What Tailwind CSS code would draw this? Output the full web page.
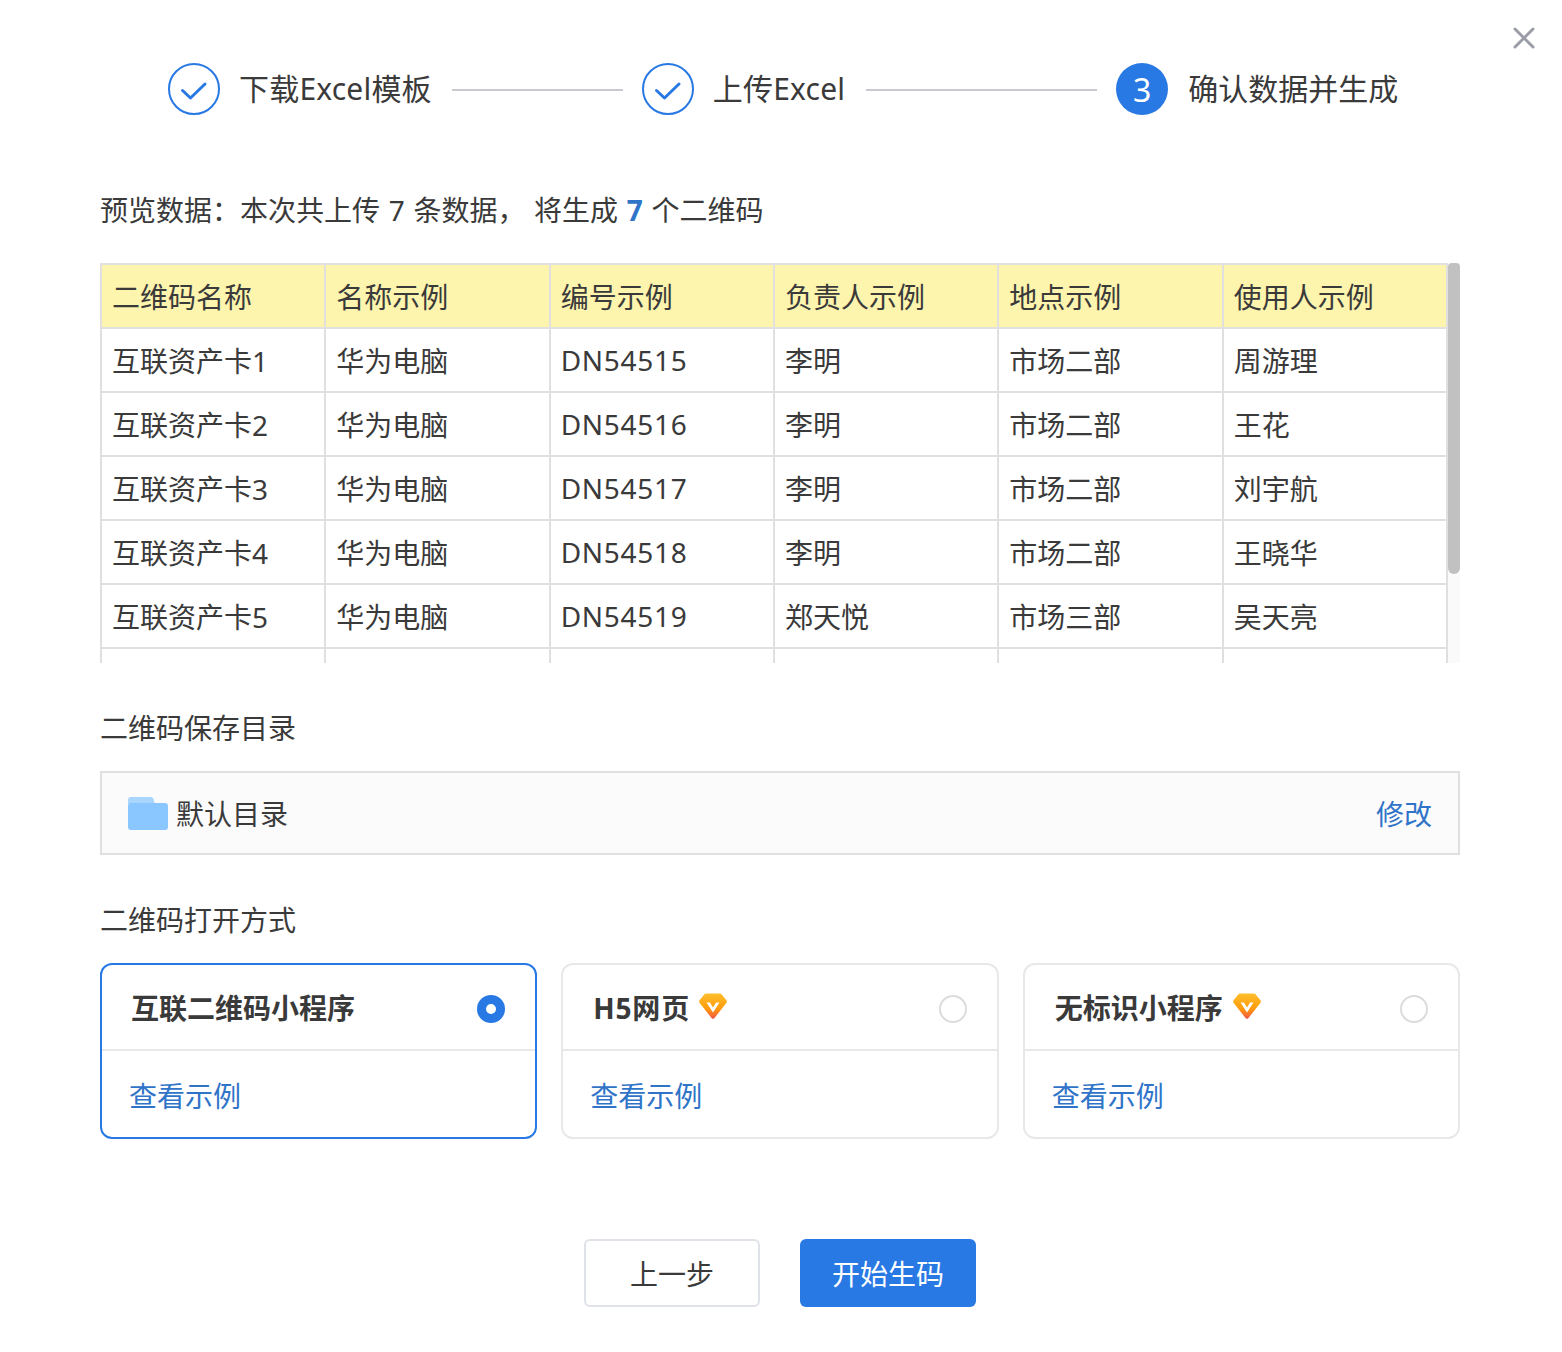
<!DOCTYPE html>
<html lang="zh-CN">
<head>
    <meta charset="UTF-8">
    <title>批量生成二维码</title>
    <script src="https://cdn.jsdelivr.net/npm/@tailwindcss/browser@4"></script>
</head>
<body class="bg-white text-[#3a3a3a] font-['Noto_Sans','Noto_Sans_CJK_SC',sans-serif]">
    <div class="relative w-[1562px] h-[1352px] pl-[100px] pr-[102px] pt-[63px] text-[28px] leading-[40px]">
        <!-- close -->
        <svg class="absolute left-[1512px] top-[26px] w-6 h-6" viewBox="0 0 24 24" fill="none" stroke="#9a9ca6" stroke-width="3" stroke-linecap="round">
            <path d="M3 3l18 18M21 3L3 21"/>
        </svg>

        <!-- steps -->
        <div class="flex items-center h-[52px] pl-[68px] text-[30px]">
            <div class="flex items-center justify-center w-[52px] h-[52px] rounded-full border-2 border-[#2979e4]">
                <svg class="w-7 h-7 mt-px" viewBox="0 0 28 28" fill="none" stroke="#2979e4" stroke-width="3" stroke-linecap="round" stroke-linejoin="round"><path d="M2.500 14.500l8 7.500L25 8"/></svg>
            </div>
            <span class="ml-[19px] tracking-[0.2px]">下载Excel模板</span>
            <div class="ml-[20px] mt-0.5 w-[171px] h-0.5 bg-[#c8cad0]"></div>
            <div class="ml-[19px] flex items-center justify-center w-[52px] h-[52px] rounded-full border-2 border-[#2979e4]">
                <svg class="w-7 h-7 mt-px" viewBox="0 0 28 28" fill="none" stroke="#2979e4" stroke-width="3" stroke-linecap="round" stroke-linejoin="round"><path d="M2.500 14.500l8 7.500L25 8"/></svg>
            </div>
            <span class="ml-[19px] tracking-[0.2px]">上传Excel</span>
            <div class="ml-[21px] mt-0.5 w-[231px] h-0.5 bg-[#c8cad0]"></div>
            <div class="ml-[19px] flex items-center justify-center pt-0.5 w-[52px] h-[52px] rounded-full bg-[#2979e4] text-white text-[32px]">3</div>
            <span class="ml-5">确认数据并生成</span>
        </div>

        <p class="mt-[75px] whitespace-pre [word-spacing:1.4px]">预览数据：本次共上传 7 条数据， 将生成 <b class="text-[#2f74c8]">7</b> 个二维码</p>

        <!-- table -->
        <div class="mt-[33px] h-[400px] flex overflow-hidden">
            <table class="w-[1348px] h-max table-fixed border-collapse">
                <thead>
                    <tr class="h-16 bg-[#fdf4ae] text-left">
                        <th class="font-normal pl-[10px] pt-0.5 border-2 border-[#e0e0e0]">二维码名称</th>
                        <th class="font-normal pl-[10px] pt-0.5 border-2 border-[#e0e0e0]">名称示例</th>
                        <th class="font-normal pl-[10px] pt-0.5 border-2 border-[#e0e0e0]">编号示例</th>
                        <th class="font-normal pl-[10px] pt-0.5 border-2 border-[#e0e0e0]">负责人示例</th>
                        <th class="font-normal pl-[10px] pt-0.5 border-2 border-[#e0e0e0]">地点示例</th>
                        <th class="font-normal pl-[10px] pt-0.5 border-2 border-[#e0e0e0]">使用人示例</th>
                    </tr>
                </thead>
                <tbody>
                    <tr class="h-16">
                        <td class="pl-[10px] pt-0.5 border-2 border-[#e0e0e0]">互联资产卡1</td>
                        <td class="pl-[10px] pt-0.5 border-2 border-[#e0e0e0]">华为电脑</td>
                        <td class="pl-[10px] border-2 border-[#e0e0e0] tracking-[0.7px]">DN54515</td>
                        <td class="pl-[10px] pt-0.5 border-2 border-[#e0e0e0]">李明</td>
                        <td class="pl-[10px] pt-0.5 border-2 border-[#e0e0e0]">市场二部</td>
                        <td class="pl-[10px] pt-0.5 border-2 border-[#e0e0e0]">周游理</td>
                    </tr>
                    <tr class="h-16">
                        <td class="pl-[10px] pt-0.5 border-2 border-[#e0e0e0]">互联资产卡2</td>
                        <td class="pl-[10px] pt-0.5 border-2 border-[#e0e0e0]">华为电脑</td>
                        <td class="pl-[10px] border-2 border-[#e0e0e0] tracking-[0.7px]">DN54516</td>
                        <td class="pl-[10px] pt-0.5 border-2 border-[#e0e0e0]">李明</td>
                        <td class="pl-[10px] pt-0.5 border-2 border-[#e0e0e0]">市场二部</td>
                        <td class="pl-[10px] pt-0.5 border-2 border-[#e0e0e0]">王花</td>
                    </tr>
                    <tr class="h-16">
                        <td class="pl-[10px] pt-0.5 border-2 border-[#e0e0e0]">互联资产卡3</td>
                        <td class="pl-[10px] pt-0.5 border-2 border-[#e0e0e0]">华为电脑</td>
                        <td class="pl-[10px] border-2 border-[#e0e0e0] tracking-[0.7px]">DN54517</td>
                        <td class="pl-[10px] pt-0.5 border-2 border-[#e0e0e0]">李明</td>
                        <td class="pl-[10px] pt-0.5 border-2 border-[#e0e0e0]">市场二部</td>
                        <td class="pl-[10px] pt-0.5 border-2 border-[#e0e0e0]">刘宇航</td>
                    </tr>
                    <tr class="h-16">
                        <td class="pl-[10px] pt-0.5 border-2 border-[#e0e0e0]">互联资产卡4</td>
                        <td class="pl-[10px] pt-0.5 border-2 border-[#e0e0e0]">华为电脑</td>
                        <td class="pl-[10px] border-2 border-[#e0e0e0] tracking-[0.7px]">DN54518</td>
                        <td class="pl-[10px] pt-0.5 border-2 border-[#e0e0e0]">李明</td>
                        <td class="pl-[10px] pt-0.5 border-2 border-[#e0e0e0]">市场二部</td>
                        <td class="pl-[10px] pt-0.5 border-2 border-[#e0e0e0]">王晓华</td>
                    </tr>
                    <tr class="h-16">
                        <td class="pl-[10px] pt-0.5 border-2 border-[#e0e0e0]">互联资产卡5</td>
                        <td class="pl-[10px] pt-0.5 border-2 border-[#e0e0e0]">华为电脑</td>
                        <td class="pl-[10px] border-2 border-[#e0e0e0] tracking-[0.7px]">DN54519</td>
                        <td class="pl-[10px] pt-0.5 border-2 border-[#e0e0e0]">郑天悦</td>
                        <td class="pl-[10px] pt-0.5 border-2 border-[#e0e0e0]">市场三部</td>
                        <td class="pl-[10px] pt-0.5 border-2 border-[#e0e0e0]">吴天亮</td>
                    </tr>
                    <tr class="h-16">
                        <td class="border-2 border-[#e0e0e0]"></td>
                        <td class="border-2 border-[#e0e0e0]"></td>
                        <td class="border-2 border-[#e0e0e0]"></td>
                        <td class="border-2 border-[#e0e0e0]"></td>
                        <td class="border-2 border-[#e0e0e0]"></td>
                        <td class="border-2 border-[#e0e0e0]"></td>
                    </tr>
                </tbody>
            </table>
            <div class="flex-1 bg-[#fafafa]">
                <div class="h-[311px] bg-[#c1c1c1] rounded-b-md rounded-t-sm"></div>
            </div>
        </div>

        <p class="mt-[45px]">二维码保存目录</p>
        <div class="mt-[23px] h-[84px] flex items-center pl-[26px] pr-[26px] border-2 border-[#e0e0e0] bg-[#fbfbfb]">
            <svg class="w-10 h-[33px]" viewBox="0 0 40 33">
                <path d="M0 3a3 3 0 0 1 3-3h19a4 4 0 0 1 4 4l1 3H0z" fill="#a9d6fe"/>
                <path d="M0 9a3 3 0 0 1 3-3h34a3 3 0 0 1 3 3v21a3 3 0 0 1-3 3H3a3 3 0 0 1-3-3z" fill="#8ac6ff"/>
            </svg>
            <span class="ml-2 pt-0.5">默认目录</span>
            <a class="ml-auto pt-0.5 text-[#2f74c8]">修改</a>
        </div>

        <p class="mt-[45px]">二维码打开方式</p>
        <div class="mt-[23px] grid grid-cols-3 gap-6">
            <div class="h-[176px] rounded-xl border-2 border-[#2979e4]">
                <div class="h-[86px] flex items-center justify-between pl-[29px] pr-[30px] border-b-2 border-[#e8e8e8]">
                    <span class="font-bold pt-0.5">互联二维码小程序</span>
                    <span class="mt-1 w-7 h-7 rounded-full border-[9px] border-[#2979e4] bg-white"></span>
                </div>
                <a class="block mt-[25px] pl-[27px] text-[#2f74c8]">查看示例</a>
            </div>
            <div class="h-[176px] rounded-xl border-2 border-[#e8e8e8]">
                <div class="h-[86px] flex items-center pl-[30px] pr-[30px] border-b-2 border-[#e8e8e8]">
                    <span class="font-bold pt-0.5 tracking-[0.8px]">H5网页</span>
                    <svg class="ml-[9px] mb-[3px] w-7 h-7" viewBox="0 0 28 28">
                        <defs>
                            <linearGradient id="gem1" x1="0" y1="0" x2="0" y2="1">
                                <stop offset="0" stop-color="#ffc02e"/>
                                <stop offset="0.6" stop-color="#ff9a0a"/>
                                <stop offset="1" stop-color="#f4574a"/>
                            </linearGradient>
                        </defs>
                        <path d="M7 1.500h14a2 2 0 0 1 1.600.8l4.800 6a2 2 0 0 1-.1 2.600L15.500 26a2 2 0 0 1-3 0L.7 10.900a2 2 0 0 1-.1-2.600l4.800-6A2 2 0 0 1 7 1.500z" fill="url(#gem1)"/>
                        <path d="M7.500 10.500h3.500l3 5 3-5h3.500L14 20.500z" fill="#fff"/>
                    </svg>
                    <span class="ml-auto mt-1 w-7 h-7 rounded-full border-2 border-[#dcdcdc]"></span>
                </div>
                <a class="block mt-[25px] pl-[27px] text-[#2f74c8]">查看示例</a>
            </div>
            <div class="h-[176px] rounded-xl border-2 border-[#e8e8e8]">
                <div class="h-[86px] flex items-center pl-[30px] pr-[30px] border-b-2 border-[#e8e8e8]">
                    <span class="font-bold pt-0.5">无标识小程序</span>
                    <svg class="ml-[10px] mb-[3px] w-7 h-7" viewBox="0 0 28 28">
                        <defs>
                            <linearGradient id="gem2" x1="0" y1="0" x2="0" y2="1">
                                <stop offset="0" stop-color="#ffc02e"/>
                                <stop offset="0.6" stop-color="#ff9a0a"/>
                                <stop offset="1" stop-color="#f4574a"/>
                            </linearGradient>
                        </defs>
                        <path d="M7 1.500h14a2 2 0 0 1 1.600.8l4.800 6a2 2 0 0 1-.1 2.600L15.500 26a2 2 0 0 1-3 0L.7 10.900a2 2 0 0 1-.1-2.600l4.800-6A2 2 0 0 1 7 1.500z" fill="url(#gem2)"/>
                        <path d="M7.500 10.500h3.500l3 5 3-5h3.500L14 20.500z" fill="#fff"/>
                    </svg>
                    <span class="ml-auto mt-1 w-7 h-7 rounded-full border-2 border-[#dcdcdc]"></span>
                </div>
                <a class="block mt-[25px] pl-[27px] text-[#2f74c8]">查看示例</a>
            </div>
        </div>

        <div class="mt-[100px] flex justify-center gap-10">
            <button class="w-[176px] h-[68px] pt-0.5 rounded-md border-2 border-[#dfe2e8] bg-white">上一步</button>
            <button class="w-[176px] h-[68px] pt-0.5 rounded-md bg-[#2979e4] text-white">开始生码</button>
        </div>
    </div>
</body>
</html>
